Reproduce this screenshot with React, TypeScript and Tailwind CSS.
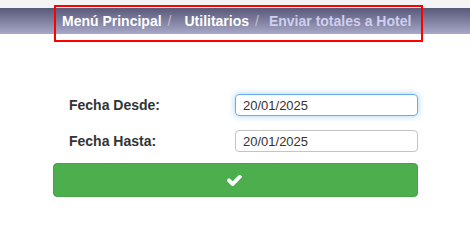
import React from 'react';

export default function App() {
  return (
    <div className="relative w-[470px] h-[243px] bg-white font-['Liberation_Sans',Arial,sans-serif]">
      <div className="h-[8px] bg-[#f4f4f4]" />
      <nav className="flex h-[26px] items-center bg-linear-to-b from-[#59597a] to-[#a8a8c8] pl-[62px] text-[14px] font-bold">
        <span className="text-white">Menú Principal</span>
        <span className="ml-[6px] mr-[13px] font-normal text-[#c0c0c8]">/</span>
        <span className="text-white">Utilitarios</span>
        <span className="ml-[6px] mr-[10px] font-normal text-[#c0c0c8]">/</span>
        <span className="text-[#cfcfee]">Enviar totales a Hotel</span>
      </nav>

      {/* annotation box */}
      <div className="absolute left-[54px] top-[5px] h-[37px] w-[369px] border-2 border-[#ff0000]" />

      <div className="mt-[60px]">
        <div className="flex items-center">
          <label className="w-[235px] pl-[69px] text-[14px] font-bold text-[#333]">Fecha Desde:</label>
          <input
            defaultValue="20/01/2025"
            className="h-[22px] w-[183px] rounded-[4px] border border-[#66afe9] px-[7px] text-[13px] text-[#333] shadow-[0_0_6px_rgba(102,175,233,0.6)] outline-none"
          />
        </div>
        <div className="mt-[14px] flex items-center">
          <label className="w-[235px] pl-[69px] text-[14px] font-bold text-[#333]">Fecha Hasta:</label>
          <input
            defaultValue="20/01/2025"
            className="h-[22px] w-[183px] rounded-[4px] border border-[#c4c4c4] px-[7px] text-[13px] text-[#333] outline-none"
          />
        </div>
        <div className="mt-[11px] pl-[53px]">
          <button className="flex h-[34px] w-[365px] items-center justify-center rounded-[4px] border border-[#46a446] bg-[#4cae4c]">
            <svg width="15" height="11" viewBox="140 400 1535 1060" className="-ml-[2px]">
              <path
                fill="#fff"
                d="M1671 566q0 40-28 68l-724 724-136 136q-28 28-68 28t-68-28l-136-136-362-362q-28-28-28-68t28-68l136-136q28-28 68-28t68 28l294 295 656-657q28-28 68-28t68 28l136 136q28 28 28 68z"
              />
            </svg>
          </button>
        </div>
      </div>
    </div>
  );
}
